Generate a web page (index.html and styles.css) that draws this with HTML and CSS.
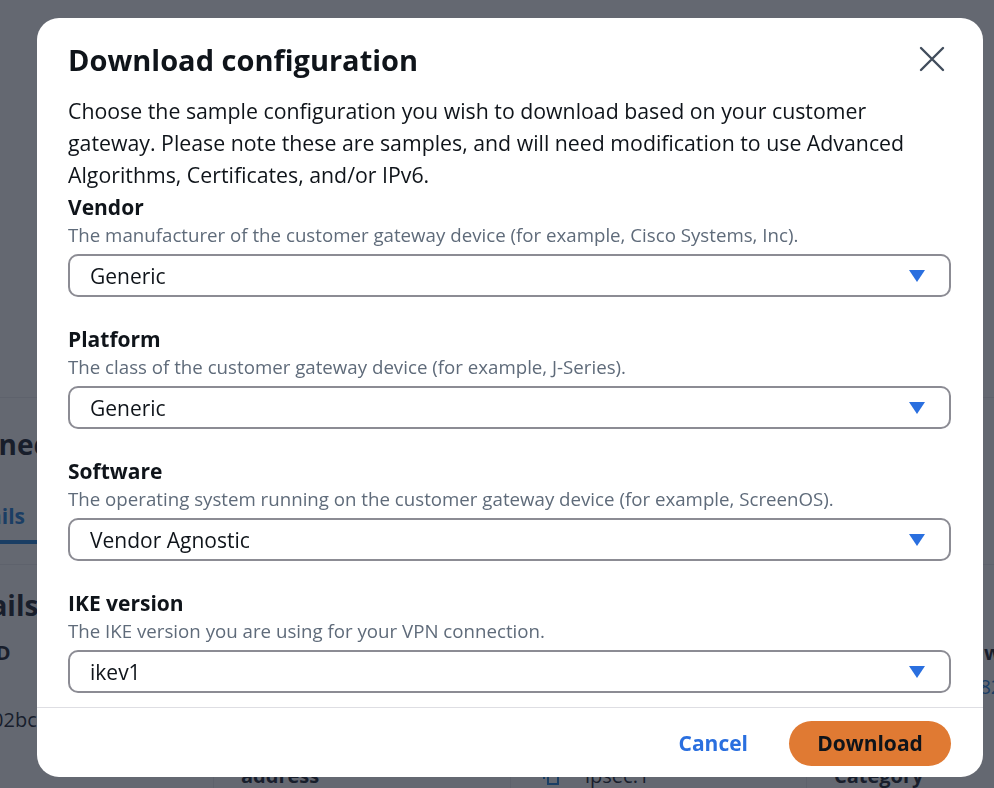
FILE: index.html
```html
<!DOCTYPE html>
<html lang="en">
<head>
<meta charset="utf-8">
<title>Download configuration</title>
<link rel="stylesheet" href="styles.css">
</head>
<body>
<div class="page">
  <div class="summary"></div>
  <h2 class="bg-title">Connections</h2>
  <div class="tabs"><span class="tab active">Details</span></div>
  <div class="panel">
    <h3 class="panel-title">Details</h3>
    <div class="row-a">
      <div class="col-first">
        <div class="kv-label">VPN ID</div>
        <div class="kv-value id">vpn-0f02bc7e9a</div>
      </div>
      <div class="col-last">
        <div class="kv-label">Owner</div>
        <div class="kv-value link">38291</div>
      </div>
    </div>
    <div class="row-b">
      <div class="col-b">
        <div class="kv-label">address</div>
      </div>
      <div class="col-b">
        <div class="kv-value">
          <svg class="copy-ico" width="16" height="18" viewBox="0 0 16 18" aria-hidden="true"><path d="M1 12 V1 H10" fill="none" stroke="#0972d3" stroke-width="2"/><rect x="5" y="5" width="10" height="12" fill="none" stroke="#0972d3" stroke-width="2"/></svg>
          <span>ipsec.1</span>
        </div>
      </div>
      <div class="col-b">
        <div class="kv-label">Category</div>
      </div>
    </div>
  </div>
</div>

<div class="overlay"></div>

<div class="modal" role="dialog" aria-labelledby="dlg-title">
  <div class="modal-head">
    <h1 class="modal-title" id="dlg-title">Download configuration</h1>
    <button class="close-btn" aria-label="Close">
      <svg width="28" height="28" viewBox="0 0 28 28" aria-hidden="true"><path d="M3 3 L25 25 M25 3 L3 25" stroke="#414d5c" stroke-width="2.4" stroke-linecap="round" fill="none"/></svg>
    </button>
  </div>
  <div class="modal-body">
    <p class="intro">Choose the sample configuration you wish to download based on your customer gateway. Please note these are samples, and will need modification to use Advanced Algorithms, Certificates, and/or IPv6.</p>

    <div class="field">
      <div class="label">Vendor</div>
      <div class="desc">The manufacturer of the customer gateway device (for example, Cisco Systems, Inc).</div>
      <div class="select"><span>Generic</span><span class="caret"></span></div>
    </div>

    <div class="field">
      <div class="label">Platform</div>
      <div class="desc">The class of the customer gateway device (for example, J-Series).</div>
      <div class="select"><span>Generic</span><span class="caret"></span></div>
    </div>

    <div class="field">
      <div class="label">Software</div>
      <div class="desc">The operating system running on the customer gateway device (for example, ScreenOS).</div>
      <div class="select"><span>Vendor Agnostic</span><span class="caret"></span></div>
    </div>

    <div class="field last">
      <div class="label">IKE version</div>
      <div class="desc">The IKE version you are using for your VPN connection.</div>
      <div class="select"><span>ikev1</span><span class="caret"></span></div>
    </div>
  </div>
  <div class="modal-foot">
    <button class="btn-link">Cancel</button>
    <button class="btn-primary">Download</button>
  </div>
</div>
</body>
</html>
```

FILE: styles.css
```css
* { box-sizing: border-box; }

html, body {
  margin: 0;
  padding: 0;
  width: 994px;
  height: 788px;
  overflow: hidden;
  background: #ffffff;
  font-family: "Open Sans", "Noto Sans", sans-serif;
  color: #000716;
}

/* background page (under the overlay) */
.page {
  width: 994px;
}
.summary {
  height: 398px;
  border-bottom: 1px solid #e9ebed;
}
.bg-title {
  margin: 28px 0 0 -55px;
  font-size: 28px;
  line-height: 36px;
  font-weight: 700;
}
.tabs {
  margin-top: 40px;
  height: 63px;
  border-bottom: 1px solid #e9ebed;
}
.tab {
  display: inline-block;
  margin-left: -60px;
  padding: 0 2px 10px 12px;
  width: 97px;
  font-size: 21px;
  line-height: 28px;
  font-weight: 700;
}
.tab.active {
  color: #0972d3;
  border-bottom: 4px solid #0972d3;
}
.panel-title {
  margin: 22px 0 0 -59px;
  font-size: 28px;
  line-height: 36px;
  font-weight: 700;
}
.row-a {
  display: flex;
  margin: 16px 0 0 -58px;
}
.col-first { width: 1026px; flex: none; }
.col-last { width: 200px; flex: none; }
.kv-label {
  font-size: 20px;
  line-height: 28px;
  font-weight: 700;
}
.kv-value {
  margin-top: 4px;
  font-size: 20px;
  line-height: 32px;
}
.kv-value.id { margin: 37px 0 0 -9px; }
.kv-value.link { color: #0972d3; }
.row-b {
  display: flex;
  margin: -12px 0 0 213px;
}
.col-b {
  width: 297px;
  flex: none;
  padding: 38px 0 0 27px;
  border-left: 1px solid #e9ebed;
}
.col-b:nth-child(2) { width: 296px; padding-left: 32px; }
.col-b .kv-value {
  margin-top: 0;
  line-height: 28px;
  display: flex;
  align-items: center;
  gap: 26px;
}
.copy-ico { display: block; }

.overlay {
  position: fixed;
  inset: 0;
  background: rgba(34, 40, 52, 0.7);
}

/* modal */
.modal {
  position: fixed;
  left: 37px;
  top: 18px;
  width: 946px;
  height: 759px;
  background: #ffffff;
  border-radius: 22px;
  display: flex;
  flex-direction: column;
  overflow: hidden;
}
.modal-head {
  display: flex;
  align-items: flex-start;
  justify-content: space-between;
  padding: 24px 32px 0 31px;
}
.modal-title {
  margin: 0;
  font-size: 29px;
  line-height: 36px;
  font-weight: 700;
  color: #0f141a;
}
.close-btn {
  border: 0;
  background: none;
  padding: 0;
  margin: 3px 5px 0 0;
  width: 28px;
  height: 28px;
  cursor: pointer;
}
.close-btn svg { display: block; }

.modal-body {
  flex: 1;
  min-height: 0;
  overflow: hidden;
  padding: 17px 32px 0 31px;
  border-bottom: 1px solid #dedee3;
}
.intro {
  margin: 0;
  font-size: 21.3px;
  line-height: 32px;
  color: #0f141a;
}
.field { margin-bottom: 28px; }
.field:first-of-type { margin-top: 2px; }
.field.last { margin-bottom: 0; }
.label {
  font-size: 21px;
  line-height: 28px;
  font-weight: 700;
  color: #0f141a;
}
.desc {
  font-size: 18.7px;
  line-height: 28px;
  color: #5f6b7a;
}
.select {
  margin-top: 5px;
  height: 43px;
  border: 2px solid #8c8c94;
  border-radius: 10px;
  display: flex;
  align-items: center;
  justify-content: space-between;
  padding: 0 24px 0 20px;
  font-size: 21px;
  color: #0f141a;
}
.caret {
  width: 0;
  height: 0;
  border-left: 8.5px solid transparent;
  border-right: 8.5px solid transparent;
  border-top: 12px solid #2a6fdf;
}

.modal-foot {
  height: 69px;
  flex: none;
  display: flex;
  align-items: center;
  justify-content: flex-end;
  gap: 21px;
  padding: 1px 32px 0 31px;
}
.btn-link {
  border: 0;
  background: none;
  padding: 0 20px;
  font-family: inherit;
  font-size: 21px;
  font-weight: 700;
  color: #2a6fdf;
}
.btn-primary {
  border: 0;
  height: 45px;
  width: 162px;
  border-radius: 23px;
  background: #e07a33;
  font-family: inherit;
  font-size: 21px;
  font-weight: 700;
  color: #0f141a;
}
```
